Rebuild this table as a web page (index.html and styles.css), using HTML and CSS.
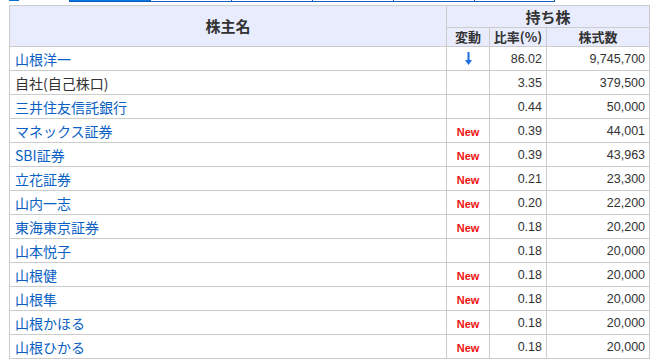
FILE: index.html
```html
<!DOCTYPE html>
<html lang="ja">
<head>
<meta charset="utf-8">
<title>株主</title>
<link rel="stylesheet" href="styles.css">
</head>
<body>
<div class="topstrip">
  <span class="mark"></span>
  <div class="tabs">
    <span class="tab active"></span>
    <span class="tab"></span>
    <span class="tab"></span>
    <span class="tab"></span>
    <span class="tab"></span>
    <span class="tab"></span>
  </div>
</div>
<table class="holders">
  <colgroup>
    <col class="c-name">
    <col class="c-chg">
    <col class="c-rate">
    <col class="c-num">
  </colgroup>
  <thead>
    <tr class="h1">
      <th rowspan="2" class="big">株主名</th>
      <th colspan="3" class="big">持ち株</th>
    </tr>
    <tr class="h2">
      <th>変動</th>
      <th>比率(%)</th>
      <th>株式数</th>
    </tr>
  </thead>
  <tbody>
    <tr><td class="name"><a href="#">山根洋一</a></td><td class="chg"><svg class="down" width="9" height="15" viewBox="0 0 9 15"><path d="M4.5 1V12" stroke="#1a6fe0" stroke-width="2" fill="none"/><path d="M1 9L4.5 14L8 9Z" fill="#1a6fe0"/></svg></td><td class="num">86.02</td><td class="num">9,745,700</td></tr>
    <tr><td class="name plain">自社(自己株口)</td><td class="chg"></td><td class="num">3.35</td><td class="num">379,500</td></tr>
    <tr><td class="name"><a href="#">三井住友信託銀行</a></td><td class="chg"></td><td class="num">0.44</td><td class="num">50,000</td></tr>
    <tr><td class="name"><a href="#">マネックス証券</a></td><td class="chg"><span class="new">New</span></td><td class="num">0.39</td><td class="num">44,001</td></tr>
    <tr><td class="name"><a href="#">SBI証券</a></td><td class="chg"><span class="new">New</span></td><td class="num">0.39</td><td class="num">43,963</td></tr>
    <tr><td class="name"><a href="#">立花証券</a></td><td class="chg"><span class="new">New</span></td><td class="num">0.21</td><td class="num">23,300</td></tr>
    <tr><td class="name"><a href="#">山内一志</a></td><td class="chg"><span class="new">New</span></td><td class="num">0.20</td><td class="num">22,200</td></tr>
    <tr><td class="name"><a href="#">東海東京証券</a></td><td class="chg"><span class="new">New</span></td><td class="num">0.18</td><td class="num">20,200</td></tr>
    <tr><td class="name"><a href="#">山本悦子</a></td><td class="chg"></td><td class="num">0.18</td><td class="num">20,000</td></tr>
    <tr><td class="name"><a href="#">山根健</a></td><td class="chg"><span class="new">New</span></td><td class="num">0.18</td><td class="num">20,000</td></tr>
    <tr><td class="name"><a href="#">山根隼</a></td><td class="chg"><span class="new">New</span></td><td class="num">0.18</td><td class="num">20,000</td></tr>
    <tr><td class="name"><a href="#">山根かほる</a></td><td class="chg"><span class="new">New</span></td><td class="num">0.18</td><td class="num">20,000</td></tr>
    <tr><td class="name"><a href="#">山根ひかる</a></td><td class="chg"><span class="new">New</span></td><td class="num">0.18</td><td class="num">20,000</td></tr>
  </tbody>
</table>
</body>
</html>
```

FILE: styles.css
```css
html, body {
  margin: 0;
  padding: 0;
  background: #fff;
}
body {
  font-family: "Liberation Sans", "Noto Sans CJK JP", sans-serif;
  color: #333;
}
.topstrip {
  display: flex;
  height: 2px;
  margin-left: 9px;
  overflow: hidden;
}
.mark {
  width: 10px;
  height: 1px;
  background: #0a6fd6;
}
.tabs {
  display: flex;
  margin-left: 50px;
}
.tab {
  box-sizing: border-box;
  width: 81px;
  height: 2px;
  border-left: 1px solid #1560c0;
  border-bottom: 1px solid #1560c0;
}
.tab:last-child {
  border-right: 1px solid #1560c0;
}
.tab.active {
  background: #0a78e0;
  border-color: #0a5cc0;
}
.holders {
  margin: 3px 0 0 9px;
  border-collapse: collapse;
  table-layout: fixed;
  width: 640px;
  border: 1px solid #ccc;
}
.c-name { width: 437px; }
.c-chg { width: 43px; }
.c-rate { width: 57px; }
.c-num { width: 103px; }
.holders th,
.holders td {
  border: 1px solid #ccc;
  padding: 0;
}
.holders th {
  background: #e8ecfc;
  color: #333;
  font-family: "Noto Sans CJK JP", sans-serif;
  font-weight: bold;
  font-size: 13px;
  text-align: center;
  line-height: 18px;
}
.holders th.big {
  font-size: 15px;
}
.h1 th { height: 21px; }
.h2 th { height: 18px; }
.holders td {
  height: 23px;
}
.name {
  font-family: "Noto Sans CJK JP", sans-serif;
  font-size: 14px;
  padding-left: 5px !important;
  white-space: nowrap;
}
.name a {
  color: #0a5fc4;
  text-decoration: none;
}
.name.plain {
  color: #333;
}
.chg {
  text-align: center;
}
.down {
  display: block;
  margin: 0 auto;
}
.new {
  color: #ee1111;
  font-weight: bold;
  font-size: 11px;
}
.num {
  text-align: right;
  font-size: 12.5px;
  padding-right: 4px !important;
  color: #333;
}
```
